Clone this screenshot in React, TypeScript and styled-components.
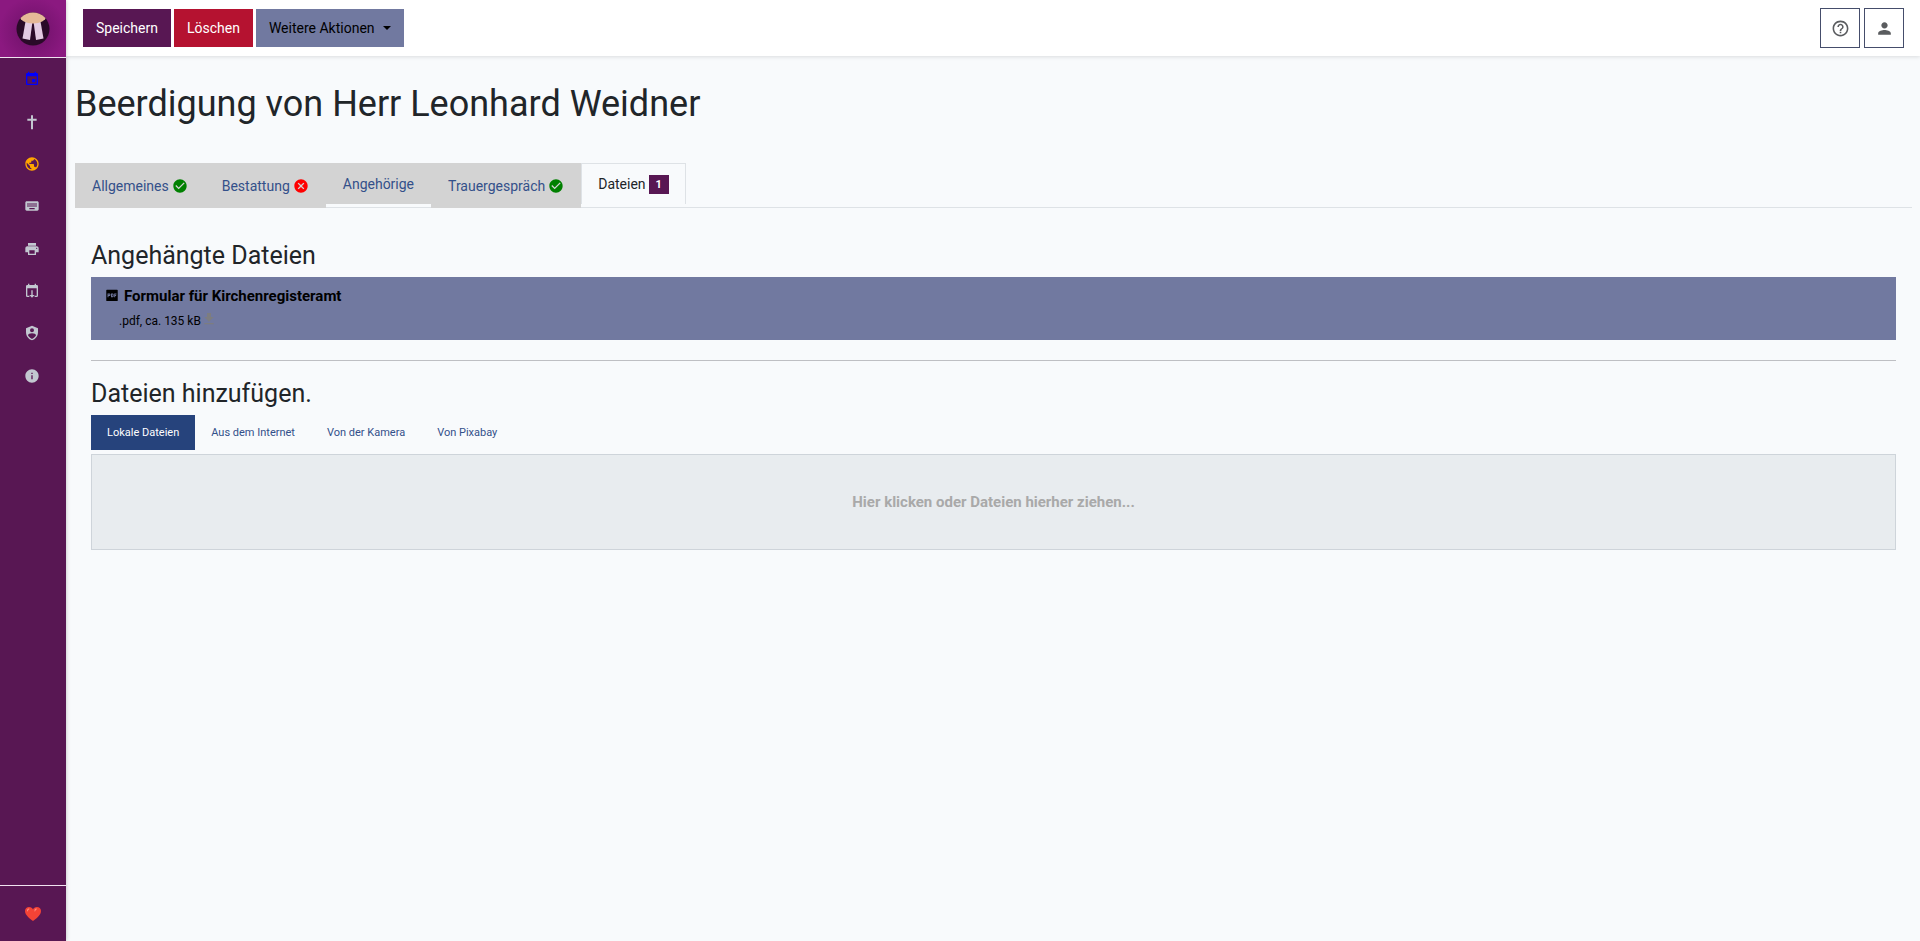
import React from "react";
import styled, { createGlobalStyle, css } from "styled-components";
import { MdEvent, MdPublic, MdKeyboard, MdPrint, MdInfo, MdCheckCircle, MdCancel, MdPerson, MdHelpOutline } from "react-icons/md";

const GlobalStyle = createGlobalStyle`
  *, *::before, *::after { box-sizing: border-box; }
  body {
    margin: 0;
    background: #f8fafc;
    color: #212529;
    font: 400 14px/22px Roboto, "Liberation Sans", sans-serif;
  }
  button, input { font: inherit; }
  h1, h2, p, ul { margin: 0; padding: 0; }
  svg { display: block; flex: none; }
`;

const Shell = styled.div`
  display: flex;
  min-height: 100vh;
`;

const Sidebar = styled.aside`
  display: flex;
  flex-direction: column;
  flex: none;
  width: 66px;
  background: #581753;
  box-shadow: 0 0 4px rgba(0, 0, 0, 0.25);
  z-index: 2;
`;

const Brand = styled.a`
  display: flex;
  align-items: center;
  justify-content: center;
  height: 58px;
  padding-right: 1px;
  border-bottom: 1px solid #f0e3f0;
  background: radial-gradient(circle at 50% 55%, #76136f 25%, #8b1980 75%);
`;

const NavList = styled.ul`
  display: grid;
  grid-auto-rows: 1fr;
  height: 339px;
  list-style: none;
`;

const NavLink = styled.a<{ $tone?: string }>`
  display: flex;
  align-items: center;
  justify-content: center;
  height: 100%;
  padding-right: 2px;
  color: ${({ $tone }) => $tone ?? "#c2c7d0"};
`;

const SidebarFooter = styled.footer`
  display: flex;
  align-items: center;
  justify-content: center;
  height: 56px;
  margin-top: auto;
  border-top: 1px solid #f0e3f0;
`;

const Page = styled.div`
  flex: 1;
  min-width: 0;
`;

const Toolbar = styled.header`
  display: flex;
  align-items: center;
  gap: 3px;
  height: 56px;
  padding: 0 16px 0 17px;
  background: #fff;
  box-shadow: 0 1px 4px rgba(0, 0, 0, 0.12);
`;

const Action = styled.button<{ $bg: string; $dark?: boolean }>`
  display: flex;
  align-items: center;
  gap: 8px;
  height: 38px;
  padding: 0 13px;
  border: 0;
  background: ${({ $bg }) => $bg};
  color: ${({ $dark }) => ($dark ? "#000" : "#fff")};
`;

const Caret = styled.span`
  border: 4px solid transparent;
  border-top-color: currentColor;
  border-bottom: 0;
`;

const ToolbarEnd = styled.div`
  display: flex;
  gap: 4px;
  margin-left: auto;
`;

const IconButton = styled.button`
  display: flex;
  align-items: center;
  justify-content: center;
  width: 40px;
  height: 40px;
  padding: 0;
  border: 1px solid #454d6b;
  background: #fff;
  color: #5a5c5f;
`;

const Main = styled.main`
  padding: 25px 8px 24px 9px;
`;

const Title = styled.h1`
  font-size: 36px;
  font-weight: 400;
  line-height: 46px;
`;

const Tabs = styled.nav`
  display: flex;
  align-items: flex-start;
  height: 45px;
  margin-top: 36px;
  border-bottom: 1px solid #dee2e6;
`;

const Tab = styled.a<{ $active?: boolean; $short?: boolean }>`
  display: flex;
  align-items: center;
  gap: 3px;
  height: ${({ $short }) => ($short ? 41 : 45)}px;
  padding: 0 16px;
  border: 1px solid lightgrey;
  border-bottom: 0;
  background: lightgrey;
  color: #33508a;
  text-decoration: none;
  ${({ $active }) =>
    $active &&
    css`
      border-color: #dee2e6;
      background: #f8fafc;
      color: #212529;
    `}
`;

const Badge = styled.span`
  padding: 0 7px;
  background: #581753;
  color: #fff;
  font-size: 11px;
  font-weight: 700;
  line-height: 19px;
`;

const Panel = styled.div`
  padding: 32px 16px 0;
`;

const Heading = styled.h2`
  font-size: 25px;
  font-weight: 400;
  line-height: 32px;
`;

const FileCard = styled.article`
  height: 63px;
  margin: 5px 0 20px;
  padding: 8px 14px;
  background: #7179a0;
  color: #000;
`;

const FileName = styled.a`
  display: flex;
  align-items: center;
  gap: 5px;
  color: inherit;
  font-size: 15px;
  font-weight: 700;
  line-height: 22px;
  text-decoration: none;
`;

const FileMeta = styled.p`
  display: flex;
  align-items: flex-start;
  padding: 4px 14px;
  font-size: 12px;
  line-height: 20px;

  svg { color: #7d7d80; }
`;

const Rule = styled.hr`
  margin: 0 0 17px;
  border: 0;
  border-top: 1px solid #bebfc3;
`;

const Pills = styled.nav`
  display: flex;
  margin: 5px 0 4px;
`;

const Pill = styled.a<{ $active?: boolean }>`
  padding: 0 16px;
  background: ${({ $active }) => ($active ? "#26437c" : "transparent")};
  color: ${({ $active }) => ($active ? "#fff" : "#33508a")};
  font-size: 11px;
  line-height: 35px;
  text-decoration: none;
`;

const DropZone = styled.button`
  display: block;
  width: 100%;
  height: 96px;
  border: 1px solid #ced4da;
  background: #e8ecef;
  color: #a9a9a9;
  font-size: 15px;
  font-weight: 700;
`;

const PdfGlyph = () => (
  <svg width="14" height="14" viewBox="1 2 22 22" aria-hidden="true">
    <path fill="currentColor" fillRule="evenodd" d="M4 3h16a1 1 0 0 1 1 1v16a1 1 0 0 1-1 1H4a1 1 0 0 1-1-1V4a1 1 0 0 1 1-1zM5 9v6h1.5v-2H8a1.5 1.5 0 0 0 1.5-1.5v-1A1.5 1.5 0 0 0 8 9zm1.500 1.500H8v1H6.500zM10.500 9v6H13a1.500 1.500 0 0 0 1.500-1.500v-3A1.500 1.500 0 0 0 13 9zm1.500 1.500h1v3h-1zM15.500 9v6H17v-2h1.500v-1.500H17v-1h2V9z" />
  </svg>
);

const Glyph = ({ d, size = 16 }: { d: string; size?: number }) => (
  <svg width={size} height={size} viewBox="0 0 24 24" fill="currentColor" aria-hidden="true">
    <path d={d} />
  </svg>
);

const crossPath = "M10.500 2h3v5H19v3h-5.500v13h-3V10H5V7h5.500z";
const calendarImportPath = "M19 3h-1V1h-2v2H8V1H6v2H5a2 2 0 0 0-2 2v14a2 2 0 0 0 2 2h3v-2H5V8h14v11h-3v2h3a2 2 0 0 0 2-2V5a2 2 0 0 0-2-2zM11 11h2v7h3l-4 4-4-4h3z";
const shieldAccountPath = "M12 1 3 5v6c0 5.550 3.840 10.740 9 12 5.160-1.260 9-6.450 9-12V5zm0 4a3 3 0 1 1 0 6 3 3 0 0 1 0-6zm5.130 12A9.500 9.500 0 0 1 12 20.920 9.500 9.500 0 0 1 6.870 17 12 12 0 0 1 6 15.470c0-1.650 2.710-3 6-3s6 1.320 6 3a12 12 0 0 1-.87 1.530z";
const downloadPath = "M5 20h14v-2H5zm14-11h-4V3H9v6H5l7 7z";

const Logo = () => (
  <svg width="34" height="34" viewBox="0 0 34 34" aria-hidden="true">
    <defs>
      <clipPath id="logo-disc"><circle cx="17" cy="17" r="16.500" /></clipPath>
    </defs>
    <g clipPath="url(#logo-disc)">
      <rect width="34" height="34" fill="#2a0a28" />
      <path d="M9.500 9.500H16.500L14 28L6.500 26.500z" fill="#e3cae2" />
      <path d="M17.500 9.500H24.500L27.500 26.500L20 28z" fill="#e3cae2" />
      <ellipse cx="17" cy="4.500" rx="13" ry="7" fill="#e5b898" />
    </g>
  </svg>
);

const Heart = () => (
  <svg width="16" height="16" viewBox="0 0 32 32" aria-hidden="true">
    <path fill="#f44336" d="M16 30C11 26 0 19 0 10 0 5 4 2 8 2c4 0 7 2 8 5 1-3 4-5 8-5s8 3 8 8c0 9-11 16-16 20z" />
    <path fill="#ff8a80" d="M4 9c0-3 2-4 4-4 1 0 1 1 0 2-2 1-2 3-3 4-1 0-1-1-1-2zm15 0c0-3 2-4 4-4 1 0 1 1 0 2-2 1-2 3-3 4-1 0-1-1-1-2z" />
  </svg>
);

const navItems = [
  { label: "Kalender", tone: "blue", icon: <MdEvent size={16} /> },
  { label: "Kasualien", icon: <Glyph d={crossPath} /> },
  { label: "Webseite", tone: "orange", icon: <MdPublic size={16} /> },
  { label: "Eingabe", icon: <MdKeyboard size={16} /> },
  { label: "Ausgabe", icon: <MdPrint size={16} /> },
  { label: "Import", icon: <Glyph d={calendarImportPath} /> },
  { label: "Administration", icon: <Glyph d={shieldAccountPath} /> },
  { label: "Info", icon: <MdInfo size={16} /> },
];

const uploadSources = ["Lokale Dateien", "Aus dem Internet", "Von der Kamera", "Von Pixabay"];

export default function App() {
  return (
    <>
      <GlobalStyle />
      <Shell>
        <Sidebar>
          <Brand href="#" aria-label="Startseite"><Logo /></Brand>
          <NavList>
            {navItems.map(({ label, tone, icon }) => (
              <li key={label}>
                <NavLink href="#" aria-label={label} $tone={tone}>{icon}</NavLink>
              </li>
            ))}
          </NavList>
          <SidebarFooter><Heart /></SidebarFooter>
        </Sidebar>
        <Page>
          <Toolbar>
            <Action $bg="#581753">Speichern</Action>
            <Action $bg="#b51230">Löschen</Action>
            <Action $bg="#7179a0" $dark>Weitere Aktionen <Caret /></Action>
            <ToolbarEnd>
              <IconButton aria-label="Hilfe"><MdHelpOutline size={19} /></IconButton>
              <IconButton aria-label="Benutzer"><MdPerson size={19} /></IconButton>
            </ToolbarEnd>
          </Toolbar>
          <Main>
            <Title>Beerdigung von Herr Leonhard Weidner</Title>
            <Tabs>
              <Tab href="#">Allgemeines <MdCheckCircle size={16} color="green" /></Tab>
              <Tab href="#">Bestattung <MdCancel size={16} color="red" /></Tab>
              <Tab href="#" $short>Angehörige</Tab>
              <Tab href="#">Trauergespräch <MdCheckCircle size={16} color="green" /></Tab>
              <Tab href="#" $short $active>Dateien <Badge>1</Badge></Tab>
            </Tabs>
            <Panel>
              <Heading>Angehängte Dateien</Heading>
              <FileCard>
                <FileName href="#"><PdfGlyph />Formular für Kirchenregisteramt</FileName>
                <FileMeta>.pdf, ca. 135 kB <Glyph d={downloadPath} /></FileMeta>
              </FileCard>
              <Rule />
              <Heading>Dateien hinzufügen.</Heading>
              <Pills>
                {uploadSources.map((source, index) => (
                  <Pill key={source} href="#" $active={index === 0}>{source}</Pill>
                ))}
              </Pills>
              <DropZone>Hier klicken oder Dateien hierher ziehen...</DropZone>
            </Panel>
          </Main>
        </Page>
      </Shell>
    </>
  );
}
